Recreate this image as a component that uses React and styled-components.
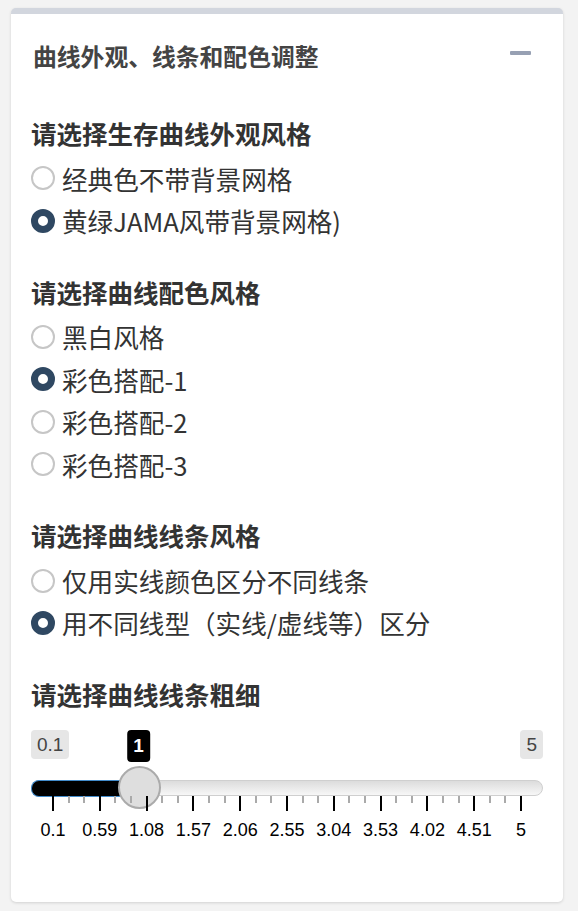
import React from 'react'
import styled, { createGlobalStyle } from "styled-components"

const GlobalStyle = createGlobalStyle`
body{
  margin:0;
  background:#f3f3f3;
  font-family:"Noto Sans CJK SC","Noto Sans",sans-serif;
}
`

const groups = [
  { title: "请选择生存曲线外观风格", options: ["经典色不带背景网格", "黄绿JAMA风带背景网格)"], checked: 1 },
  { title: "请选择曲线配色风格", options: ["黑白风格", "彩色搭配-1", "彩色搭配-2", "彩色搭配-3"], checked: 1 },
  { title: "请选择曲线线条风格", options: ["仅用实线颜色区分不同线条", "用不同线型（实线/虚线等）区分"], checked: 1 },
]

const min = 0.1
const max = 5
const value = 1
const gridLabels = ["0.1", "0.59", "1.08", "1.57", "2.06", "2.55", "3.04", "3.53", "4.02", "4.51", "5"]

export default function App() {
  const pct = (value - min) / (max - min)
  const minorTicks = []
  for (let i = 0; i < 10; i++) {
    minorTicks.push(i + 1 / 3, i + 2 / 3)
  }
  return (
    <Page>
      <GlobalStyle />
      <Card>
        <Header>
          <Title>曲线外观、线条和配色调整</Title>
          <Collapse aria-label="collapse"><Minus /></Collapse>
        </Header>
        <Body>
          {groups.map((g) => (
            <Group key={g.title}>
              <Heading>{g.title}</Heading>
              <Options>
                {g.options.map((o, i) => (
                  <Option key={o}>
                    <Radio checked={i === g.checked} />
                    {o}
                  </Option>
                ))}
              </Options>
            </Group>
          ))}
          <Group>
            <Heading>请选择曲线线条粗细</Heading>
            <Slider>
              <EdgeRow>
                <Edge>0.1</Edge>
                <Edge>5</Edge>
              </EdgeRow>
              <Tooltip style={{ left: `calc(21.5px + ${pct} * (100% - 43px))` }}>{value}</Tooltip>
              <Track>
                <Fill style={{ width: `calc(21.5px + ${pct} * (100% - 43px))` }} />
                <Handle style={{ left: `calc(${pct} * (100% - 43px))` }} />
              </Track>
              <Grid>
                {minorTicks.map((t) => (
                  <Tick key={"m" + t} style={{ left: `calc(22px + ${t / 10} * (100% - 44px))` }} />
                ))}
                {gridLabels.map((l, i) => (
                  <React.Fragment key={l}>
                    <Tick major style={{ left: `calc(22px + ${i / 10} * (100% - 44px))` }} />
                    <GridText style={{ left: `calc(22px + ${i / 10} * (100% - 44px))` }}>{l}</GridText>
                  </React.Fragment>
                ))}
              </Grid>
            </Slider>
          </Group>
        </Body>
      </Card>
    </Page>
  )
}

const Page = styled.div`
padding:8px 15px 9px 11px;
`
const Card = styled.div`
background:#fff;
border-top:6px solid #d2d6de;
border-radius:5px;
box-shadow:0 1px 3px rgba(0,0,0,0.14);
`
const Header = styled.div`
height:84px;
padding:0 32px 0 22px;
display:flex;
align-items:center;
justify-content:space-between;
`
const Title = styled.h3`
margin:0;
font-size:23.8px;
font-weight:700;
color:#444;
line-height:1;
`
const Collapse = styled.div`
display:flex;
align-items:center;
height:24px;
margin-top:-6px;
`
const Minus = styled.span`
display:block;
width:21px;
height:4px;
background:#97a0b3;
border-radius:1px;
`
const Body = styled.div`
padding:17px 20px 60px 20px;
display:flex;
flex-direction:column;
gap:32px;
`
const Group = styled.div`
display:flex;
flex-direction:column;
`
const Heading = styled.div`
font-size:25.5px;
font-weight:700;
color:#333;
line-height:36px;
margin-bottom:6px;
`
const Options = styled.div`
display:flex;
flex-direction:column;
`
const Option = styled.label`
display:flex;
align-items:center;
gap:7px;
height:42.4px;
font-size:25.6px;
color:#333;
`
const Radio = styled.span`
box-sizing:border-box;
width:24px;
height:24px;
border-radius:50%;
background:#fff;
border:${(p) => (p.checked ? "7px solid #2f4862" : "2px solid #c6c6c6")};
flex-shrink:0;
`
const Slider = styled.div`
position:relative;
margin-top:12px;
font-family:"Liberation Sans",Arial,sans-serif;
`
const EdgeRow = styled.div`
display:flex;
justify-content:space-between;
`
const Edge = styled.span`
height:29px;
line-height:29px;
padding:0 6px;
background:#e6e6e6;
border-radius:4px;
font-size:19px;
color:#444;
`
const Tooltip = styled.span`
position:absolute;
top:0;
transform:translateX(-50%);
height:32px;
line-height:32px;
padding:0 6.5px;
background:#000;
color:#fff;
font-weight:700;
font-size:19px;
border-radius:4px;
`
const Track = styled.div`
position:relative;
box-sizing:border-box;
margin-top:21px;
height:16px;
border:1.5px solid #cfcfcf;
border-radius:8px;
background:linear-gradient(#dcdcdc,#f7f7f7);
`
const Fill = styled.div`
position:absolute;
left:-1.5px;
top:-1.5px;
bottom:-1.5px;
box-sizing:border-box;
background:#000;
border:1.5px solid #428bca;
border-right:none;
border-radius:8px 0 0 8px;
`
const Handle = styled.div`
position:absolute;
top:-15px;
box-sizing:border-box;
width:43px;
height:43px;
border-radius:50%;
background:#dedede;
border:2px solid #ababab;
`
const Grid = styled.div`
position:relative;
height:46px;
`
const Tick = styled.span`
position:absolute;
top:0;
width:2px;
margin-left:-1px;
height:${(p) => (p.major ? "15px" : "7px")};
background:${(p) => (p.major ? "#000" : "#aaa")};
`
const GridText = styled.span`
position:absolute;
top:24px;
transform:translateX(-50%);
font-size:18px;
line-height:20px;
color:#000;
`
